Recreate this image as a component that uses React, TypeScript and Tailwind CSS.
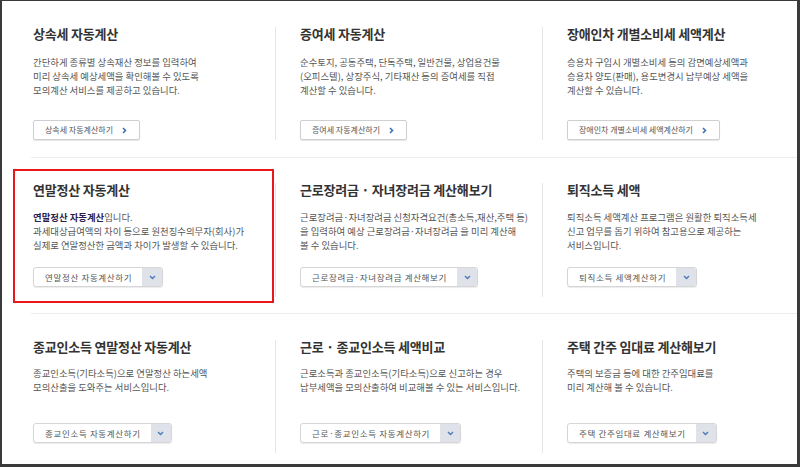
import React from "react"

type Item = {
  title: string
  lines: React.ReactNode[]
  button: string
}

const rows: { kind: "link" | "select"; items: Item[] }[] = [
  {
    kind: "link",
    items: [
      {
        title: "상속세 자동계산",
        lines: [
          "간단하게 종류별 상속재산 정보를 입력하여",
          "미리 상속세 예상세액을 확인해볼 수 있도록",
          "모의계산 서비스를 제공하고 있습니다.",
        ],
        button: "상속세 자동계산하기",
      },
      {
        title: "증여세 자동계산",
        lines: [
          "순수토지, 공동주택, 단독주택, 일반건물, 상업용건물",
          "(오피스텔), 상장주식, 기타재산 등의 증여세를 직접",
          "계산할 수 있습니다.",
        ],
        button: "증여세 자동계산하기",
      },
      {
        title: "장애인차 개별소비세 세액계산",
        lines: [
          "승용차 구입시 개별소비세 등의 감면예상세액과",
          "승용차 양도(판매), 용도변경시 납부예상 세액을",
          "계산할 수 있습니다.",
        ],
        button: "장애인차 개별소비세 세액계산하기",
      },
    ],
  },
  {
    kind: "select",
    items: [
      {
        title: "연말정산 자동계산",
        lines: [
          <>
            <b className="font-bold text-[#2b2150]">연말정산 자동계산</b>입니다.
          </>,
          "과세대상급여액의 차이 등으로 원천징수의무자(회사)가",
          "실제로 연말정산한 금액과 차이가 발생할 수 있습니다.",
        ],
        button: "연말정산 자동계산하기",
      },
      {
        title: "근로장려금 · 자녀장려금 계산해보기",
        lines: [
          "근로장려금·자녀장려금 신청자격요건(총소득,재산,주택 등)",
          "을 입력하여 예상 근로장려금·자녀장려금 을 미리 계산해",
          "볼 수 있습니다.",
        ],
        button: "근로장려금·자녀장려금 계산해보기",
      },
      {
        title: "퇴직소득 세액",
        lines: [
          "퇴직소득 세액계산 프로그램은 원활한 퇴직소득세",
          "신고 업무를 돕기 위하여 참고용으로 제공하는",
          "서비스입니다.",
        ],
        button: "퇴직소득 세액계산하기",
      },
    ],
  },
  {
    kind: "select",
    items: [
      {
        title: "종교인소득 연말정산 자동계산",
        lines: [
          "종교인소득(기타소득)으로 연말정산 하는세액",
          "모의산출을 도와주는 서비스입니다.",
        ],
        button: "종교인소득 자동계산하기",
      },
      {
        title: "근로 · 종교인소득 세액비교",
        lines: [
          "근로소득과 종교인소득(기타소득)으로 신고하는 경우",
          "납부세액을 모의산출하여 비교해볼 수 있는 서비스입니다.",
        ],
        button: "근로·종교인소득 자동계산하기",
      },
      {
        title: "주택 간주 임대료 계산해보기",
        lines: [
          "주택의 보증금 등에 대한 간주임대료를",
          "미리 계산해 볼 수 있습니다.",
        ],
        button: "주택 간주임대료 계산해보기",
      },
    ],
  },
]

// per-row spacing, measured off the screenshot
const rowStyle = [
  { row: "h-[157px] border-b border-[#ececec]", pad: "pt-[26px]", desc: "mt-[14px]", btn: "mt-[17px]", sep: "h-[113px]" },
  { row: "h-[156px] border-b border-[#ececec]", pad: "pt-[25px]", desc: "mt-[13px]", btn: "mt-[10px]", sep: "h-[114px]" },
  { row: "h-[150px]", pad: "pt-[26px]", desc: "mt-[12px]", btn: "mt-[10px]", sep: "h-[113px]" },
]

function LinkButton({ label }: { label: string }) {
  return (
    <span className="inline-flex h-[20px] items-center rounded-[2px] border border-[#cfcfcf] bg-white pl-[11px] pr-[12px] text-[8px] text-[#555] shadow-[0_1px_1px_rgba(0,0,0,0.1)]">
      {label}
      <svg width="5" height="7" viewBox="0 0 5 7" className="ml-[9px]">
        <path d="M1 1l2.5 2.5L1 6" fill="none" stroke="#3d6fb8" strokeWidth="1.6" />
      </svg>
    </span>
  )
}

function SelectButton({ label }: { label: string }) {
  return (
    <span className="inline-flex h-[20px] overflow-hidden rounded-[3px] border border-[#d6d6d6] bg-white shadow-[0_1px_1px_rgba(0,0,0,0.08)]">
      <span className="flex items-center pl-[11px] pr-[10px] text-[8.5px] tracking-[0.65px] text-[#555]">
        {label}
      </span>
      <span className="flex w-[20px] items-center justify-center bg-[#dfe3e9]">
        <svg width="7" height="5" viewBox="0 0 7 5">
          <path d="M1 1l2.5 2.5L6 1" fill="none" stroke="#4a78b8" strokeWidth="1.4" />
        </svg>
      </span>
    </span>
  )
}

export default function App() {
  return (
    <div className="h-[467px] w-[800px] overflow-hidden border-b-[3px] border-l-2 border-r-[3px] border-t border-[#3a3a3a] bg-white font-['Noto_Sans_CJK_KR','Noto_Sans',sans-serif]">
      {rows.map((row, r) => {
        const s = rowStyle[r]
        return (
          <div key={r} className={"relative ml-[29px] grid grid-cols-[244px_267px_1fr] " + s.row}>
            {r === 1 && (
              <div className="pointer-events-none absolute left-[-18px] top-[11px] h-[134px] w-[261px] border-2 border-[#e8171b]" />
            )}
            {row.items.map((item, c) => (
              <div key={c} className={s.pad}>
                <div className={s.sep + " " + (c === 0 ? "pl-[2px]" : "border-l border-[#e6e6e6] pl-[24px]")}>
                  <h3 className="h-[14px] whitespace-nowrap text-[13px] font-bold leading-[14px] tracking-[-0.2px] text-[#333]">
                    {item.title}
                  </h3>
                  <div className={"h-[42px] whitespace-nowrap text-[9.4px] leading-[14px] text-[#555] " + s.desc}>
                    {item.lines.map((line, i) => (
                      <div key={i} className="h-[14px]">
                        {line}
                      </div>
                    ))}
                  </div>
                  <div className={"h-[20px] " + s.btn}>
                    {row.kind === "link" ? <LinkButton label={item.button} /> : <SelectButton label={item.button} />}
                  </div>
                </div>
              </div>
            ))}
          </div>
        )
      })}
    </div>
  )
}
